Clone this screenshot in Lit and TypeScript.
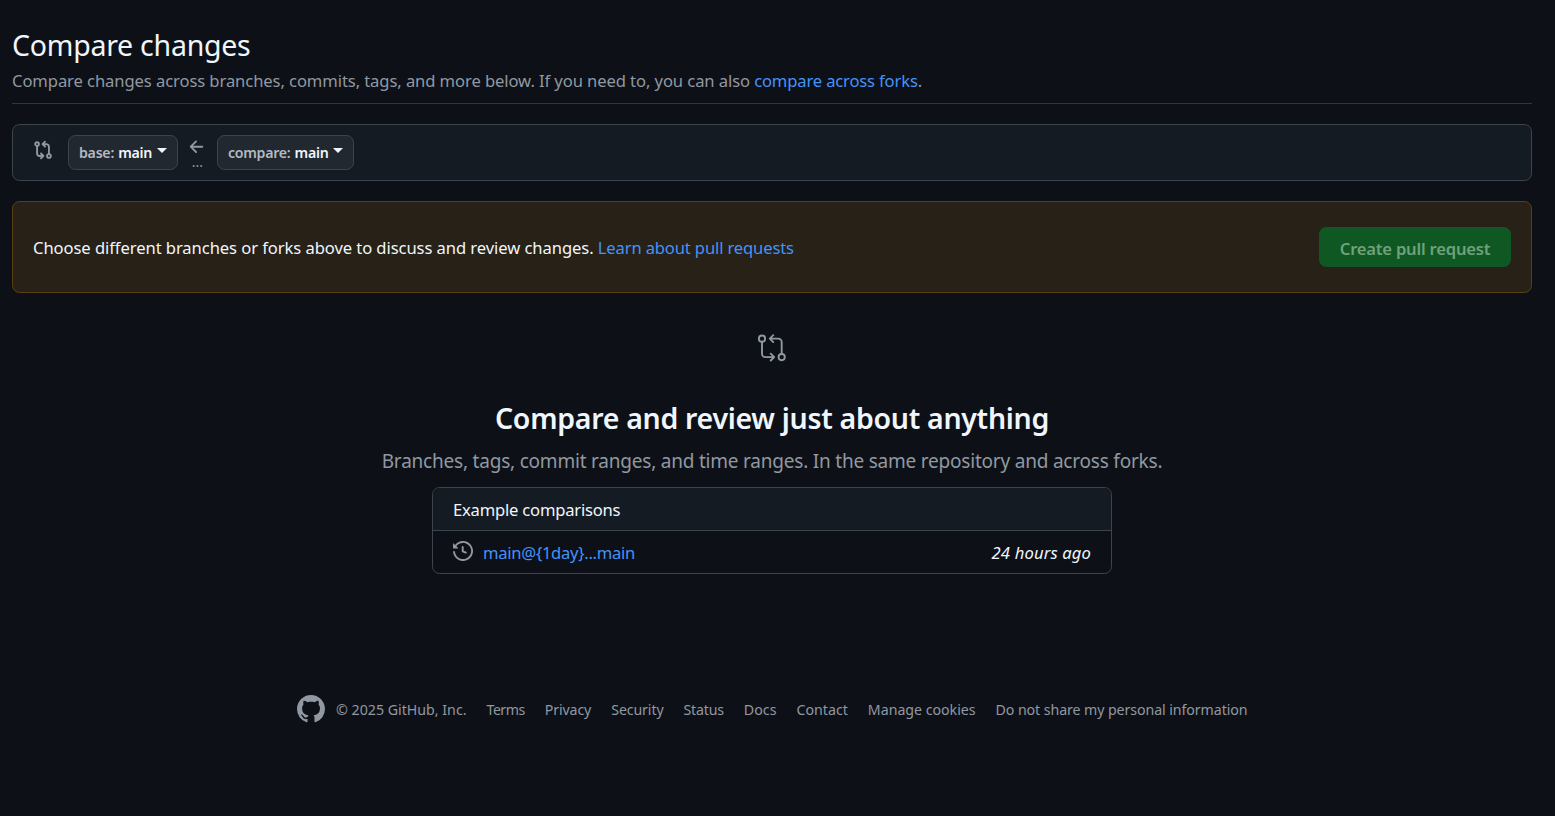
import { LitElement, html, css, svg } from "lit";
import { customElement } from "lit/decorators.js";

const compareSmall = svg`<svg class="icon" width="20" height="20" viewBox="0 0 16 16" fill="none" stroke="currentColor" stroke-width="1.5" stroke-linecap="round" stroke-linejoin="round">
  <circle cx="3.25" cy="3.25" r="1.5"/><circle cx="12.75" cy="12.75" r="1.5"/>
  <path d="M3.25 5v5.5a2.25 2.25 0 0 0 2.25 2.25h2.4M6.4 10.8l1.95 1.95-1.95 1.95M12.75 11V5.5a2.25 2.25 0 0 0-2.25-2.25H8.1M9.6 1.3 7.65 3.25 9.6 5.2"/></svg>`;

const compareLarge = svg`<svg class="icon" width="30" height="30" viewBox="0 0 24 24" fill="none" stroke="currentColor" stroke-width="1.5" stroke-linecap="round" stroke-linejoin="round">
  <circle cx="4" cy="4.5" r="2.5"/><circle cx="19.75" cy="19.25" r="2.5"/>
  <path d="M4 7v9.5a2.75 2.75 0 0 0 2.75 2.75h6.5M11 16.5l2.75 2.75L11 22M19.75 16.75V7.25A2.75 2.75 0 0 0 17 4.5h-6.25M13 1.75l-2.75 2.75L13 7.25"/></svg>`;

const arrowLeft = svg`<svg class="icon" width="20" height="20" viewBox="0 0 16 16" fill="currentColor"><path d="M7.78 12.53a.75.75 0 0 1-1.06 0L2.47 8.28a.75.75 0 0 1 0-1.06l4.25-4.25a.751.751 0 0 1 1.042.018.751.751 0 0 1 .018 1.042L4.81 7h7.44a.75.75 0 0 1 0 1.5H4.81l2.97 2.97a.75.75 0 0 1 0 1.06Z"/></svg>`;

const historyIcon = svg`<svg class="icon" width="20" height="20" viewBox="0 0 16 16" fill="currentColor"><path d="m.427 1.927 1.215 1.215a8.002 8.002 0 1 1-1.6 5.685.75.75 0 1 1 1.493-.154 6.5 6.5 0 1 0 1.18-4.458l1.358 1.358A.25.25 0 0 1 3.896 6H.25A.25.25 0 0 1 0 5.75V2.104a.25.25 0 0 1 .427-.177ZM7.75 4a.75.75 0 0 1 .75.75v2.992l2.028.812a.75.75 0 0 1-.557 1.392l-2.5-1A.751.751 0 0 1 7 8.25v-3.5A.75.75 0 0 1 7.75 4Z"/></svg>`;

const mark = svg`<svg class="icon" width="28" height="28" viewBox="0 0 16 16" fill="currentColor"><path d="M8 0c4.42 0 8 3.58 8 8a8.013 8.013 0 0 1-5.45 7.59c-.4.08-.55-.17-.55-.38 0-.27.01-1.13.01-2.2 0-.75-.25-1.23-.54-1.48 1.78-.2 3.65-.88 3.65-3.95 0-.88-.31-1.59-.82-2.15.08-.2.36-1.02-.08-2.12 0 0-.67-.22-2.2.82-.64-.18-1.32-.27-2-.27-.68 0-1.36.09-2 .27-1.53-1.03-2.2-.82-2.2-.82-.44 1.1-.16 1.92-.08 2.12-.51.56-.82 1.28-.82 2.15 0 3.06 1.86 3.75 3.64 3.95-.23.2-.44.55-.51 1.07-.46.21-1.61.55-2.33-.66-.15-.24-.6-.83-1.23-.82-.67.01-.27.38.01.53.34.19.73.9.82 1.13.16.45.68 1.31 2.69.94 0 .67.01 1.3.01 1.49 0 .21-.15.45-.55.38A7.995 7.995 0 0 1 0 8c0-4.42 3.58-8 8-8Z"/></svg>`;

// Footer links: label and letter tracking in px
const footerLinks: [string, number][] = [
  ["Terms", -0.52],
  ["Privacy", -0.12],
  ["Security", -0.12],
  ["Status", -0.22],
  ["Docs", 0.05],
  ["Contact", 0],
  ["Manage cookies", -0.02],
  ["Do not share my personal information", -0.085],
];

@customElement("branch-select")
export class BranchSelect extends LitElement {
  static properties = { label: {}, branch: {} };
  declare label: string;
  declare branch: string;

  static styles = css`
    :host { display: block; }
    button {
      box-sizing: border-box; display: flex; align-items: center; height: 35px; margin: 0; padding: 0 10px;
      border: 1px solid #3d444d; border-radius: 7.5px; background: #212830; color: #f0f6fc;
      font: 600 14.2px/33px "Noto Sans", "Open Sans", sans-serif; letter-spacing: -0.27px; white-space: nowrap;
    }
    .label { color: #b3bac2; margin-right: 4.1px; }
    .caret { width: 0; height: 0; margin: -4px 0 0 4.8px; border: 5px solid transparent; border-top-color: #f0f6fc; border-bottom: 0; }
  `;

  render() {
    return html`<button type="button"><span class="label">${this.label}:</span><span>${this.branch}</span><span class="caret"></span></button>`;
  }
}

@customElement("app-root")
export class AppRoot extends LitElement {
  static styles = css`
    :host {
      display: block; box-sizing: border-box; min-height: 100vh; padding: 23px 23px 0 12px;
      background: #0d1117; color: #f0f6fc; overflow: hidden;
      font-family: "Noto Sans", "Open Sans", sans-serif; font-size: 16.6px; line-height: 27px; white-space: nowrap;
    }
    h1, h2, p { margin: 0; }
    a { color: #4493f8; text-decoration: none; }
    .icon { display: block; flex: none; }
    .head { padding-bottom: 9px; border-bottom: 1px solid #2f353d; }
    h1 { font-size: 28.5px; line-height: 44px; font-weight: 400; letter-spacing: -0.25px; }
    .lead { color: #9198a1; letter-spacing: -0.09px; }
    .lead a { letter-spacing: -0.16px; }

    .range {
      box-sizing: border-box; display: flex; height: 57px; margin-top: 20px; padding: 10px 20px;
      border: 1px solid #3d444d; border-radius: 7.5px; background: #151b23; color: #9198a1;
    }
    .range > .icon { margin: 5px 15px 0 0; }
    .between { display: flex; flex-direction: column; align-items: center; width: 39px; padding-top: 2px; box-sizing: border-box; }
    .dots { font-size: 14px; line-height: 14px; margin-top: -2px; }

    .notice {
      box-sizing: border-box; display: flex; align-items: center; justify-content: space-between;
      height: 92px; margin-top: 20px; padding: 0 20px;
      border: 1px solid #5a400f; border-radius: 7.5px; background: #272117; letter-spacing: -0.08px;
    }
    .notice a { letter-spacing: -0.15px; }
    .create {
      width: 192px; height: 40px; margin: 0; padding: 3px 0 0; border: 0; border-radius: 7.5px;
      background: #105823; color: #6fa27b;
      font: 600 16.6px/37px "Noto Sans", "Open Sans", sans-serif; letter-spacing: -0.21px;
    }

    .blank { display: flex; flex-direction: column; align-items: center; padding-top: 40px; }
    .blank > .icon { color: #9198a1; }
    h2 { margin-top: 33px; font-size: 28.5px; line-height: 44px; font-weight: 600; letter-spacing: -0.295px; }
    .sub { font-size: 19px; line-height: 30px; margin-top: 6px; color: #9198a1; letter-spacing: -0.21px; }
    .box { box-sizing: border-box; width: 680px; height: 87px; margin-top: 11px; border: 1px solid #3d444d; border-radius: 7.5px; overflow: hidden; }
    .box-head { height: 42px; line-height: 43px; padding: 0 20px; background: #151b23; border-bottom: 1px solid #3d444d; letter-spacing: -0.21px; }
    .row { display: flex; height: 42px; line-height: 43px; padding: 0 20px; }
    .row .icon { color: #9198a1; margin: 10px 10px 0 0; }
    .row a { letter-spacing: -0.28px; }
    .row em { margin-left: auto; letter-spacing: 0.15px; }

    footer { display: flex; align-items: center; justify-content: center; margin-top: 121px; height: 28px; color: #9198a1; font-size: 14.2px; }
    .copy { margin-left: 11.5px; }
    footer a { color: inherit; margin-left: 20px; }
  `;

  render() {
    return html`
      <header class="head">
        <h1>Compare changes</h1>
        <p class="lead">Compare changes across branches, commits, tags, and more below. If you need to, you can also <a>compare across forks</a>.</p>
      </header>
      <section class="range">
        ${compareSmall}
        <branch-select label="base" branch="main"></branch-select>
        <div class="between">${arrowLeft}<span class="dots">...</span></div>
        <branch-select label="compare" branch="main"></branch-select>
      </section>
      <section class="notice">
        <p>Choose different branches or forks above to discuss and review changes. <a>Learn about pull requests</a></p>
        <button class="create" type="button">Create pull request</button>
      </section>
      <section class="blank">
        ${compareLarge}
        <h2>Compare and review just about anything</h2>
        <p class="sub">Branches, tags, commit ranges, and time ranges. In the same repository and across forks.</p>
        <div class="box">
          <div class="box-head">Example comparisons</div>
          <div class="row">${historyIcon}<a>main@{1day}...main</a><em>24 hours ago</em></div>
        </div>
      </section>
      <footer>
        ${mark}
        <span class="copy">© 2025 GitHub, Inc.</span>
        ${footerLinks.map(([text, tracking]) => html`<a style="letter-spacing:${tracking}px">${text}</a>`)}
      </footer>
    `;
  }
}
